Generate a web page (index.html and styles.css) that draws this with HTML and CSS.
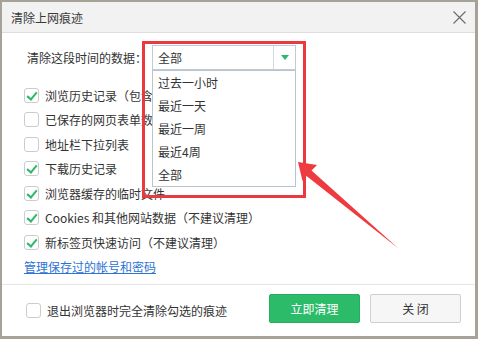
FILE: index.html
```html
<!DOCTYPE html>
<html lang="zh-CN">
<head>
  <meta charset="UTF-8">
  <meta name="viewport" content="width=device-width, initial-scale=1.0">
  <title>清除上网痕迹</title>
  <link rel="stylesheet" href="styles.css">
</head>
<body>
  <div class="dialog">
    <div class="titlebar">
      <span class="title">清除上网痕迹</span>
      <svg class="close" width="13" height="13" viewBox="0 0 13 13">
        <path d="M0.5 0.5L12.5 12.5M12.5 0.5L0.5 12.5" stroke="#6a6a6a" stroke-width="1.1" fill="none"/>
      </svg>
    </div>

    <div class="content">
      <div class="range">
        <span class="range-label">清除这段时间的数据：</span>
        <div class="select">
          <span class="select-value">全部</span>
          <span class="select-arrow">
            <svg width="8" height="5" viewBox="0 0 8 5"><path d="M0 0H8L4 5Z" fill="#2bb968"/></svg>
          </span>
          <ul class="options">
            <li>过去一小时</li>
            <li>最近一天</li>
            <li>最近一周</li>
            <li>最近4周</li>
            <li>全部</li>
          </ul>
        </div>
      </div>

      <ul class="items">
        <li class="item"><span class="check on"></span>浏览历史记录（包含</li>
        <li class="item"><span class="check"></span>已保存的网页表单数</li>
        <li class="item"><span class="check"></span>地址栏下拉列表</li>
        <li class="item"><span class="check on"></span>下载历史记录</li>
        <li class="item"><span class="check on"></span>浏览器缓存的临时文件</li>
        <li class="item"><span class="check on"></span>Cookies 和其他网站数据（不建议清理）</li>
        <li class="item"><span class="check on"></span>新标签页快速访问（不建议清理）</li>
        <li class="item"><a class="link" href="#">管理保存过的帐号和密码</a></li>
      </ul>
    </div>

    <div class="footer">
      <label class="exit-option"><span class="check"></span>退出浏览器时完全清除勾选的痕迹</label>
      <button class="btn btn-primary">立即清理</button>
      <button class="btn btn-default">关 闭</button>
    </div>

    <!-- annotation -->
    <div class="highlight"></div>
    <svg class="arrow" width="478" height="339" viewBox="0 0 478 339">
      <path d="M298 162L317 165L311.5 170.5L398.5 248.5L306.5 176L302.5 181Z" fill="#ee3b40"/>
    </svg>
  </div>
</body>
</html>
```

FILE: styles.css
```css
* {
  box-sizing: border-box;
}

body {
  margin: 0;
  padding: 2px 3px 3px 2px;
  background-color: #a7a297;
  color: #333333;
  font-family: "Noto Sans CJK SC", "Microsoft YaHei", sans-serif;
  font-size: 12px;
}

.dialog {
  position: relative;
  height: 334px;
  background-color: #ffffff;
  display: flex;
  flex-direction: column;
}

.titlebar {
  flex: none;
  height: 31px;
  padding: 0 9px;
  background-color: #f2f2f2;
  border-bottom: 1px solid #dddddd;
  display: flex;
  align-items: center;
  justify-content: space-between;
}

.title {
  font-size: 12px;
  color: #3a3a3a;
}

.content {
  flex: 1;
  padding: 12px 0 0 22px;
}

.range {
  height: 25px;
  padding-left: 3px;
  display: flex;
  align-items: center;
}

.range-label {
  width: 125px;
}

.select {
  position: relative;
  width: 144px;
  height: 25px;
  border: 1px solid #c3cbd2;
  display: flex;
}

.select-value {
  flex: 1;
  padding-left: 5px;
  line-height: 23px;
}

.select-arrow {
  width: 22px;
  border-left: 1px solid #d3d9de;
  display: flex;
  align-items: center;
  justify-content: center;
}

.options {
  position: absolute;
  left: -1px;
  top: 24px;
  width: 144px;
  height: 117px;
  margin: 0;
  padding: 0;
  list-style: none;
  background-color: #ffffff;
  border: 1px solid #b9c4cd;
}

.options li {
  height: 23px;
  line-height: 23px;
  padding-left: 5px;
}

.items {
  list-style: none;
  margin: 13px 0 0;
  padding: 0;
}

.item {
  height: 24.5px;
  display: flex;
  align-items: center;
  gap: 6px;
  white-space: nowrap;
}

.check {
  width: 15px;
  height: 15px;
  flex: none;
  border: 1px solid #cccccc;
  border-radius: 3px;
  background-color: #ffffff;
  position: relative;
}

.check.on::after {
  content: "";
  position: absolute;
  left: 4px;
  top: 1px;
  width: 4px;
  height: 8px;
  border-right: 2px solid #2bb968;
  border-bottom: 2px solid #2bb968;
  transform: rotate(40deg);
}

.link {
  color: #2e72d2;
  text-decoration: underline;
}

.footer {
  flex: none;
  height: 52px;
  padding: 9px 14px 0 24px;
  border-top: 1px solid #e6e6e6;
  display: flex;
  align-items: flex-start;
}

.exit-option {
  margin-right: auto;
  height: 29px;
  margin-top: 2px;
  display: flex;
  align-items: center;
  gap: 6px;
}

.btn {
  width: 91px;
  height: 29px;
  border-radius: 2px;
  font-family: inherit;
  font-size: 12px;
  padding: 0;
}

.btn-primary {
  background-color: #2bbb69;
  border: 1px solid #27ad60;
  color: #ffffff;
}

.btn-default {
  margin-left: 10px;
  background-color: #f6f6f6;
  border: 1px solid #cfcfcf;
  color: #333333;
}

.highlight {
  position: absolute;
  left: 140px;
  top: 39px;
  width: 164px;
  height: 157px;
  border: 3px solid #ea3a3f;
  pointer-events: none;
}

.arrow {
  position: absolute;
  left: -2px;
  top: -2px;
  pointer-events: none;
}
```
